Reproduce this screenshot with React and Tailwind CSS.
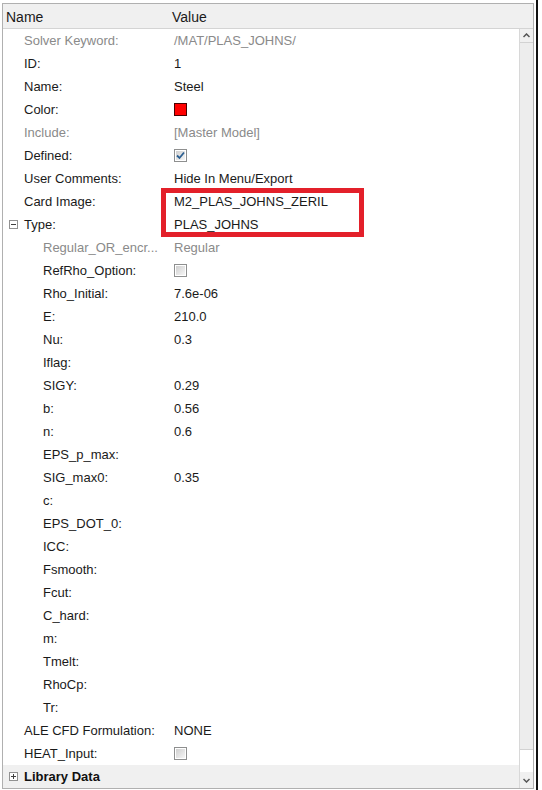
import React from "react";

const rows = [
  { label: "Solver Keyword:", value: "/MAT/PLAS_JOHNS/", dim: true },
  { label: "ID:", value: "1" },
  { label: "Name:", value: "Steel" },
  { label: "Color:", kind: "color" },
  { label: "Include:", value: "[Master Model]", dim: true },
  { label: "Defined:", kind: "checked" },
  { label: "User Comments:", value: "Hide In Menu/Export" },
  { label: "Card Image:", value: "M2_PLAS_JOHNS_ZERIL" },
  { label: "Type:", value: "PLAS_JOHNS", toggle: "minus" },
  { label: "Regular_OR_encr...", value: "Regular", dim: true, child: true },
  { label: "RefRho_Option:", kind: "box", child: true },
  { label: "Rho_Initial:", value: "7.6e-06", child: true },
  { label: "E:", value: "210.0", child: true },
  { label: "Nu:", value: "0.3", child: true },
  { label: "Iflag:", child: true },
  { label: "SIGY:", value: "0.29", child: true },
  { label: "b:", value: "0.56", child: true },
  { label: "n:", value: "0.6", child: true },
  { label: "EPS_p_max:", child: true },
  { label: "SIG_max0:", value: "0.35", child: true },
  { label: "c:", child: true },
  { label: "EPS_DOT_0:", child: true },
  { label: "ICC:", child: true },
  { label: "Fsmooth:", child: true },
  { label: "Fcut:", child: true },
  { label: "C_hard:", child: true },
  { label: "m:", child: true },
  { label: "Tmelt:", child: true },
  { label: "RhoCp:", child: true },
  { label: "Tr:", child: true },
  { label: "ALE CFD Formulation:", value: "NONE" },
  { label: "HEAT_Input:", kind: "box" },
];

function Toggle({ type }) {
  return (
    <div className="w-[9px] h-[9px] border border-[#919191] bg-white relative">
      <div className="absolute left-[1px] right-[1px] top-[3px] h-px bg-[#404040]" />
      {type === "plus" && (
        <div className="absolute top-[1px] bottom-[1px] left-[3px] w-px bg-[#404040]" />
      )}
    </div>
  );
}

function Checkbox({ checked }) {
  return (
    <div className="w-[13px] h-[13px] border border-[#8e8f8f] bg-white p-px">
      <div className="w-full h-full bg-gradient-to-br from-[#cfcfcf] to-[#f6f6f6] flex items-center justify-center">
        {checked && (
          <svg width="9" height="9" viewBox="0 0 9 9">
            <path
              d="M1 4.5 L3.5 7 L8 1.5"
              fill="none"
              stroke="#2b5f91"
              strokeWidth="1.8"
            />
          </svg>
        )}
      </div>
    </div>
  );
}

function Row({ row }) {
  let value = null;
  if (row.kind === "color") {
    value = <div className="w-[13px] h-[13px] bg-[#ff0000] border border-[#4a0000]" />;
  } else if (row.kind === "checked") {
    value = <Checkbox checked />;
  } else if (row.kind === "box") {
    value = <Checkbox />;
  } else if (row.value) {
    value = (
      <span className={row.dim ? "text-[#8a8a8a]" : "text-[#1a1a1a]"}>
        {row.value}
      </span>
    );
  }

  return (
    <div className="h-[23px] flex items-center">
      <div className="w-[171px] shrink-0 flex items-center">
        <div className="w-[21px] flex justify-center">
          {row.toggle && <Toggle type={row.toggle} />}
        </div>
        <span
          className={`${row.child ? "pl-[19px]" : ""} ${
            row.dim ? "text-[#8a8a8a]" : "text-[#1a1a1a]"
          } whitespace-nowrap`}
        >
          {row.label}
        </span>
      </div>
      <div className="flex items-center">{value}</div>
    </div>
  );
}

export default function App() {
  return (
    <div
      className="w-[542px] h-[790px] bg-white relative flex text-[13px] leading-none"
      style={{ fontFamily: '"Liberation Sans", Arial, sans-serif' }}
    >
      {/* Property panel */}
      <div className="ml-[2px] mt-[3px] w-[532px] h-[786px] border border-[#b0b0b0] flex flex-col">
        <div className="h-[25px] shrink-0 bg-[#f0f0f0] border-b border-[#d4d4d4] flex items-center pt-px text-[14px] text-[#1a1a1a]">
          <span className="pl-[3px] w-[169px]">Name</span>
          <span>Value</span>
        </div>

        <div className="flex-1 flex min-h-0">
          <div className="flex-1 flex flex-col">
            <div className="flex-1 bg-white">
              {rows.map((r) => (
                <Row key={r.label} row={r} />
              ))}
            </div>
            <div className="h-[23px] bg-[#f0f0f0] flex items-center">
              <div className="w-[21px] flex justify-center">
                <Toggle type="plus" />
              </div>
              <span className="font-bold text-[#111]">Library Data</span>
            </div>
          </div>

          {/* Scrollbar */}
          <div className="w-[14px] border-l border-[#d8d8d8] bg-[#f4f4f4] flex flex-col">
            <div className="h-[13px] flex items-center justify-center bg-[#f0f0f0]">
              <svg width="7" height="5" viewBox="0 0 7 5">
                <path d="M0.5 4 L3.5 1 L6.5 4" fill="none" stroke="#555" strokeWidth="1.5" />
              </svg>
            </div>
            <div className="h-[708px] bg-[#ededed] border-y border-[#d2d2d2]" />
            <div className="flex-1 bg-white" />
            <div className="h-[16px] flex items-center justify-center bg-[#f0f0f0]">
              <svg width="7" height="5" viewBox="0 0 7 5">
                <path d="M0.5 1 L3.5 4 L6.5 1" fill="none" stroke="#555" strokeWidth="1.5" />
              </svg>
            </div>
          </div>
        </div>
      </div>

      {/* Dark right edge */}
      <div className="ml-[2px] w-[2px] h-full bg-[#111]" />

      {/* Annotation box */}
      <div className="absolute left-[161px] top-[188px] w-[203px] h-[49px] border-[5px] border-[#e3202a]" />
    </div>
  );
}
